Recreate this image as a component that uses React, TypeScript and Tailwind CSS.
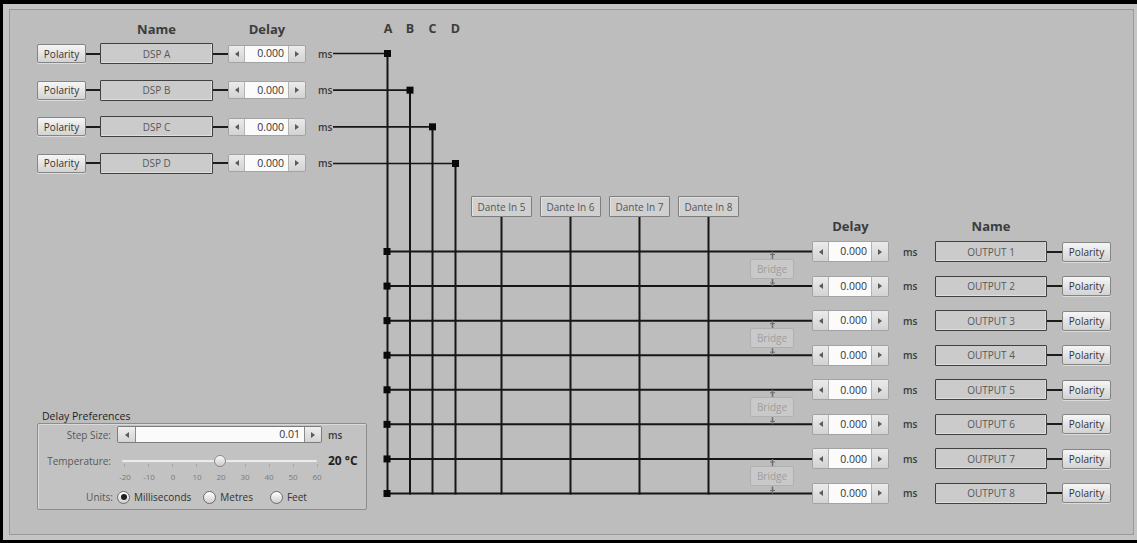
import React from "react";

function Tri({ dir }: { dir: "l" | "r" }) {
  return (
    <svg width="4" height="6" viewBox="0 0 4 6" className="block">
      <polygon points={dir === "l" ? "4,0 4,6 0,3" : "0,0 0,6 4,3"} fill="#5a5a5a" />
    </svg>
  );
}

function Stepper({ size, value }: { size: "in" | "out"; value: string }) {
  const outer = size === "in" ? "w-[78px] h-[18px]" : "w-[77px] h-[21px]";
  return (
    <div className={`flex ${outer} border border-[#a3a3a3] rounded-[2px] overflow-hidden`}>
      <div className="w-[16px] flex items-center justify-center bg-linear-to-b from-[#ebebeb] to-[#d3d3d3] border-r border-[#b3b3b3]">
        <Tri dir="l" />
      </div>
      <div className="flex-1 bg-[#fbfbfb] flex items-center justify-end pr-[4px] text-[10.5px] leading-none text-[#333]">
        {value}
      </div>
      <div className="w-[17px] flex items-center justify-center bg-linear-to-b from-[#ebebeb] to-[#d3d3d3] border-l border-[#b3b3b3]">
        <Tri dir="r" />
      </div>
    </div>
  );
}

function Polarity({ tall }: { tall?: boolean }) {
  return (
    <div
      className={`w-[49px] ${tall ? "h-[20px]" : "h-[19px]"} flex items-center justify-center rounded-[2px] border border-[#858585] bg-linear-to-b from-[#f6f6f6] to-[#d3d3d3] text-[10px] leading-none text-[#333] shadow-[0_1px_0_#dcdcdc]`}
    >
      Polarity
    </div>
  );
}

function NameBox({ label, out }: { label: string; out?: boolean }) {
  return (
    <div
      className={`${out ? "w-[112px]" : "w-[113px]"} h-[21px] flex items-center justify-center border border-[#404040] bg-[#cbcbcb] rounded-[1px] text-[10px] leading-none text-[#585858] shadow-[inset_-1px_-1px_0_#dedede]`}
    >
      {label}
    </div>
  );
}

function Wire({ w }: { w: "a" | "b" }) {
  return <div className={`${w === "a" ? "w-[14px]" : "w-[15px]"} h-[2px] bg-[#1c1c1c]`} />;
}

function Radio({ on }: { on?: boolean }) {
  return (
    <div className="w-[13px] h-[13px] rounded-full border border-[#6c6c6c] bg-linear-to-b from-[#ffffff] to-[#cfcfcf] flex items-center justify-center">
      {on && <div className="w-[6px] h-[6px] rounded-full bg-[#1e1e1e]" />}
    </div>
  );
}

export default function App() {
  const colX = [387.5, 410, 432.5, 455.5];
  const inY = [53.5, 90.17, 126.83, 163.5];
  const outY = Array.from({ length: 8 }, (_, i) => 251.5 + i * 34.57);
  const danteX = [501.5, 570.5, 639.5, 708.5];
  const bottom = outY[7];
  const bridgeTop = [0, 1, 2, 3].map((k) => 259 + k * 69.14);
  const ticks = ["-20", "-10", "0", "10", "20", "30", "40", "50", "60"];

  return (
    <div className="w-[1137px] h-[543px] bg-[#c5c5c5] border-t-[4px] border-l-[3px] border-b-[3px] border-black pl-[6px] pt-[5px] overflow-hidden font-['Open_Sans',sans-serif]">
      <div className="relative w-[1125px] h-[526px] border border-[#9a9a9a] bg-[#bdbdbd] flex">
        <svg
          className="absolute left-0 top-0"
          width="1123"
          height="524"
          viewBox="10 10 1123 524"
        >
          <g stroke="#161616" strokeWidth="2" fill="none">
            {inY.map((y, i) => (
              <g key={"in" + i}>
                <line x1={333} y1={y} x2={colX[i]} y2={y} strokeWidth="1.6" />
                <line x1={colX[i]} y1={y} x2={colX[i]} y2={bottom + 1} />
              </g>
            ))}
            {outY.map((y, i) => (
              <line key={"out" + i} x1={colX[0]} y1={y} x2={812} y2={y} />
            ))}
            {danteX.map((x, i) => (
              <line key={"d" + i} x1={x} y1={217} x2={x} y2={bottom + 1} />
            ))}
          </g>
          <g fill="#0a0a0a">
            {inY.map((y, i) => (
              <rect key={"ji" + i} x={colX[i] - 3.5} y={y - 3.5} width="7" height="7" />
            ))}
            {outY.map((y, i) => (
              <rect key={"jo" + i} x={colX[0] - 4} y={y - 3.5} width="7" height="7" />
            ))}
          </g>
          <g stroke="#6e6e6e" strokeWidth="1.5" fill="none">
            {bridgeTop.map((t, k) => (
              <g key={"b" + k}>
                <line x1={772.5} y1={outY[2 * k]} x2={772.5} y2={t} />
                <line x1={770} y1={outY[2 * k] + 3} x2={775} y2={outY[2 * k] + 3} strokeWidth="1" />
                <line x1={772.5} y1={t + 20} x2={772.5} y2={outY[2 * k + 1]} />
                <line x1={770} y1={outY[2 * k + 1] - 3} x2={775} y2={outY[2 * k + 1] - 3} strokeWidth="1" />
              </g>
            ))}
          </g>
        </svg>

        {/* Left column: inputs + delay preferences */}
        <div className="relative w-[366px] h-full pl-[27px] pt-[11px] flex flex-col">
          <div className="h-[16px] flex items-center text-[13px] font-bold text-[#3c3c3c] leading-none">
            <div className="w-[63px]" />
            <div className="w-[113px] text-center">Name</div>
            <div className="w-[15px]" />
            <div className="w-[78px] text-center">Delay</div>
          </div>
          <div className="mt-[6px] flex flex-col gap-[15.67px]">
            {["DSP A", "DSP B", "DSP C", "DSP D"].map((n) => (
              <div key={n} className="h-[21px] flex items-center">
                <Polarity />
                <Wire w="a" />
                <NameBox label={n} />
                <Wire w="b" />
                <Stepper size="in" value="0.000" />
                <span className="ml-[12px] text-[10px] leading-none font-semibold text-[#3a3a3a]">ms</span>
              </div>
            ))}
          </div>

          <div className="mt-auto mb-[24px]">
            <div className="ml-[5px] h-[13px] text-[10.5px] leading-[13px] text-[#1e1e1e]">Delay Preferences</div>
            <div className="w-[330px] h-[87px] border border-[#8c8c8c] rounded-[2px] bg-[#c2c2c2] shadow-[inset_1px_1px_0_#dadada] flex flex-col">
              <div className="mt-[2px] h-[17px] flex items-center">
                <div className="w-[73px] text-right text-[10px] leading-none text-[#585858]">Step Size:</div>
                <div className="ml-[6px] w-[205px] h-[17px] flex border border-[#7c7c7c] rounded-[2px] overflow-hidden">
                  <div className="w-[18px] flex items-center justify-center bg-linear-to-b from-[#f0f0f0] to-[#d4d4d4] border-r border-[#8a8a8a]">
                    <Tri dir="l" />
                  </div>
                  <div className="flex-1 bg-[#fbfbfb] flex items-center justify-end pr-[4px] text-[10.5px] leading-none text-[#333]">0.01</div>
                  <div className="w-[17px] flex items-center justify-center bg-linear-to-b from-[#f0f0f0] to-[#d4d4d4] border-l border-[#8a8a8a]">
                    <Tri dir="r" />
                  </div>
                </div>
                <span className="ml-[6px] text-[10px] leading-none font-semibold text-[#3a3a3a]">ms</span>
              </div>

              <div className="mt-[11px] h-[14px] flex items-center">
                <div className="w-[73px] text-right text-[10px] leading-none text-[#585858]">Temperature:</div>
                <div className="relative ml-[10px] w-[197px] h-[14px]">
                  <div className="absolute left-0 right-0 top-[5px] h-[4px] rounded-[2px] bg-[#ebebeb] border border-[#c4c4c4]" />
                  <div className="absolute left-[3px] right-[0px] top-[10px] h-[3px] flex justify-between">
                    {ticks.map((t) => (
                      <div key={t} className="w-px h-[3px] bg-[#a8a8a8]" />
                    ))}
                  </div>
                  <div className="absolute left-[93px] top-[1px] w-[12px] h-[12px] rounded-full border border-[#8a8a8a] bg-linear-to-b from-[#fafafa] to-[#cdcdcd]" />
                </div>
                <span className="ml-[10px] text-[12px] leading-none font-bold text-[#222]">20 °C</span>
              </div>

              <div className="mt-[4px] h-[10px] flex ml-[75px]">
                {ticks.map((t) => (
                  <div key={t} className="w-[24px] text-center text-[8px] leading-[10px] text-[#7a7a7a]">
                    {t}
                  </div>
                ))}
              </div>

              <div className="mt-[8px] h-[14px] flex items-center text-[10px] leading-none text-[#333]">
                <div className="w-[75px] text-right text-[#585858]">Units:</div>
                <div className="ml-[4px]"><Radio on /></div>
                <span className="ml-[4px]">Milliseconds</span>
                <div className="ml-[12px]"><Radio /></div>
                <span className="ml-[4px]">Metres</span>
                <div className="ml-[17px]"><Radio /></div>
                <span className="ml-[4px]">Feet</span>
              </div>
            </div>
          </div>
        </div>

        {/* Middle: routing matrix labels and nodes */}
        <div className="relative w-[436px] h-full pt-[11px] flex flex-col">
          <div className="h-[16px] flex pl-[1px] text-[12.5px] font-bold text-[#3c3c3c] leading-[16px]">
            <div className="w-[22px] text-center">A</div>
            <div className="w-[22px] text-center">B</div>
            <div className="w-[23px] text-center">C</div>
            <div className="w-[23px] text-center">D</div>
          </div>
          <div className="mt-[159px] ml-[95px] flex gap-[8px]">
            {["Dante In 5", "Dante In 6", "Dante In 7", "Dante In 8"].map((d) => (
              <div
                key={d}
                className="w-[61px] h-[21px] flex items-center justify-center border border-[#7e7e7e] bg-[#d0d0d0] rounded-[1px] text-[10px] leading-none text-[#555] shadow-[inset_1px_1px_0_#e2e2e2]"
              >
                {d}
              </div>
            ))}
          </div>
          <div className="mt-[42px] ml-[374px] flex flex-col gap-[49.14px]">
            {[0, 1, 2, 3].map((k) => (
              <div
                key={k}
                className="w-[44px] h-[20px] flex items-center justify-center border border-[#b0b0b0] bg-[#c9c9c9] rounded-[2px] text-[10px] leading-none text-[#9e9e9e]"
              >
                Bridge
              </div>
            ))}
          </div>
        </div>

        {/* Right column: outputs */}
        <div className="relative w-[299px] h-full pt-[208px] flex flex-col">
          <div className="h-[16px] flex items-center text-[13px] font-bold text-[#3c3c3c] leading-none">
            <div className="w-[77px] text-center">Delay</div>
            <div className="w-[46px]" />
            <div className="w-[112px] text-center">Name</div>
          </div>
          <div className="mt-[7px] flex flex-col gap-[13.57px]">
            {[1, 2, 3, 4, 5, 6, 7, 8].map((n) => (
              <div key={n} className="h-[21px] flex items-center">
                <Stepper size="out" value="0.000" />
                <div className="w-[46px] pl-[14px] text-[10px] leading-none font-semibold text-[#3a3a3a]">ms</div>
                <NameBox label={`OUTPUT ${n}`} out />
                <Wire w="b" />
                <Polarity tall />
              </div>
            ))}
          </div>
        </div>
      </div>
    </div>
  );
}
